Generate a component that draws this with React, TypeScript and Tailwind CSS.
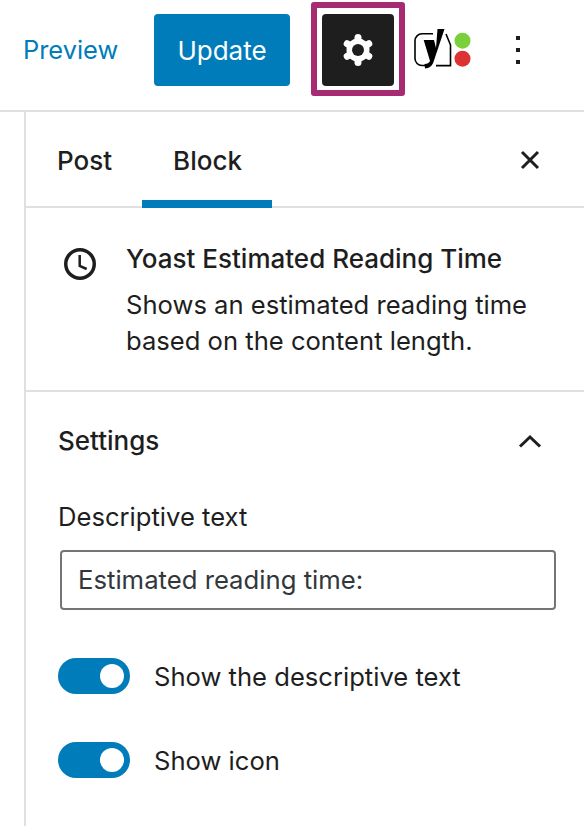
import React from 'react';

const Toggle: React.FC<{ label: string }> = ({ label }) => (
  <div className="flex items-center h-9">
    <span className="flex items-center justify-end w-[72px] h-9 rounded-full bg-[#007cba] pr-[6px]">
      <span className="block w-6 h-6 rounded-full bg-white" />
    </span>
    <span className="ml-6 pt-[2px] text-[25.6px] text-[#1e1e1e]">{label}</span>
  </div>
);

const App: React.FC = () => {
  return (
    <div className="w-[584px] h-[826px] overflow-hidden bg-white font-['Inter',sans-serif] text-[#1e1e1e]">
      {/* Top bar */}
      <header className="flex items-center h-[112px] pb-[10px] border-b-2 border-[#e0e0e0]">
        <span className="ml-[23px] w-[131px] text-[25.4px] text-[#007cba]">Preview</span>
        <button className="w-[136px] h-[72px] rounded-[4px] bg-[#007cba] text-white text-[26px]">Update</button>
        <div className="ml-[21px] -mt-[2px] w-[94px] h-[94px] border-[6px] border-[#a72b72] rounded-[3px] pt-[6px] pl-[5px]">
          <button className="w-[72px] h-[72px] rounded-[4px] bg-[#1e1e1e] flex items-center justify-center">
            <svg width="34" height="34" viewBox="0 0 34 34" fill="white">
              <circle cx="17" cy="17" r="11.500" />
              <g stroke="white" strokeWidth="7" strokeLinecap="round">
                <path d="M17 17V4.500" />
                <path d="M17 17v12.500" />
                <path d="M17 17L6.200 10.750" />
                <path d="M17 17l10.800-6.250" />
                <path d="M17 17L6.200 23.250" />
                <path d="M17 17l10.800 6.250" />
              </g>
              <circle cx="17" cy="17" r="6" fill="#1e1e1e" />
            </svg>
          </button>
        </div>
        <svg className="ml-[9px]" width="58" height="46" viewBox="0 0 58 46" fill="none">
          <path d="M19 6.800H8a7 7 0 0 0-7 7V31.500a7 7 0 0 0 7 7h4M22 38.600h14.500V18L32 7" stroke="black" strokeWidth="1.600" />
          <path d="M23.500 2H30.500L19.500 35c-1.500 4.500-4.500 6-8.500 6.500l-.5-4.500c3-.2 4.500-1 5.500-3L9.700 13H20l2 8Z" fill="black" />
          <circle cx="48.500" cy="13.700" r="8" fill="#7ad03a" />
          <circle cx="48.500" cy="31.700" r="8" fill="#dc3232" />
        </svg>
        <span className="ml-[44px] flex flex-col gap-[8px]">
          <span className="block w-1 h-1 bg-[#1e1e1e]" />
          <span className="block w-1 h-1 bg-[#1e1e1e]" />
          <span className="block w-1 h-1 bg-[#1e1e1e]" />
        </span>
      </header>

      {/* Sidebar */}
      <aside className="ml-6 h-[714px] border-l-2 border-[#e0e0e0]">
        <div className="flex items-center h-[96px] pt-[2px] border-b-2 border-[#e0e0e0] relative">
          <span className="ml-[31px] text-[26px] font-medium">Post</span>
          <span className="ml-[61px] text-[26px] font-medium">Block</span>
          <span className="absolute left-[116px] bottom-[-2px] w-[130px] h-2 bg-[#007cba]" />
          <svg className="ml-auto mr-[41px]" width="26" height="26" viewBox="0 0 26 26" fill="none" stroke="#1e1e1e" strokeWidth="3">
            <path d="M5 5l16 16M21 5L5 21" />
          </svg>
        </div>

        <div className="flex h-[184px] border-b-2 border-[#e0e0e0] pt-[33px]">
          <svg className="ml-[37px] mt-[6px]" width="34" height="34" viewBox="0 0 34 34" fill="none" stroke="#1e1e1e">
            <circle cx="17" cy="17" r="14.250" strokeWidth="3.500" />
            <path d="M16.700 8v11l7 3" strokeWidth="2.500" />
          </svg>
          <div className="ml-[29px] text-[26px] leading-[36px]">
            <div className="font-medium">Yoast Estimated Reading Time</div>
            <div className="mt-[10px] text-[25.6px]">
              Shows an estimated reading time
              <br />
              based on the content length.
            </div>
          </div>
        </div>

        <div className="pl-[32px]">
          <div className="flex items-center justify-between h-[97px]">
            <span className="text-[26px] font-medium">Settings</span>
            <svg className="mr-[41px]" width="26" height="16" viewBox="0 0 26 16" fill="none" stroke="#1e1e1e" strokeWidth="3">
              <path d="M3 13.500l10-9.500 10 9.500" />
            </svg>
          </div>
          <div className="text-[25.6px] leading-[36px] mt-[10px]">Descriptive text</div>
          <div className="ml-[2px] mt-[15px] w-[496px] h-[60px] border-2 border-[#757575] rounded-[4px] flex items-center pl-[16px] pt-[1px] text-[25.7px] text-[#32373c]">
            Estimated reading time:
          </div>
          <div className="mt-[48px] flex flex-col gap-[48px]">
            <Toggle label="Show the descriptive text" />
            <Toggle label="Show icon" />
          </div>
        </div>
      </aside>
    </div>
  );
};

export default App;
